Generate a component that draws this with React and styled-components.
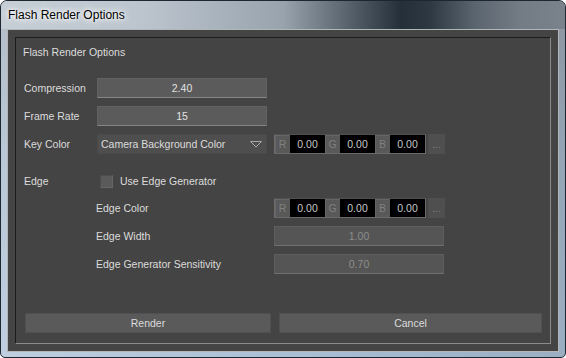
import React from "react"
import styled, { createGlobalStyle } from "styled-components"

const GlobalStyle = createGlobalStyle`
  html, body {
    margin: 0;
    padding: 0;
    background: #ffffff;
  }
  body {
    font-family: "Liberation Sans", Arial, sans-serif;
  }
`

const Window = styled.div`
  box-sizing: border-box;
  width: 566px;
  height: 358px;
  display: flex;
  flex-direction: column;
  border: 1px solid #1d2731;
  border-radius: 7px 7px 5px 5px;
  overflow: hidden;
  background:
    linear-gradient(to right, rgba(200, 210, 220, 0.55), rgba(120, 130, 140, 0.2) 60%, rgba(110, 120, 130, 0.35)),
    linear-gradient(to bottom, #9aa4ae 0px, #a9bdd2 160px, #b3cbe4 100%);
`

const TitleBar = styled.div`
  height: 28px;
  flex: none;
  display: flex;
  align-items: center;
  padding-left: 7px;
  background: linear-gradient(
    to right,
    #c6ced6 0%,
    #bcc5ce 25%,
    #98a3ae 50%,
    #55606b 62%,
    #252f39 71%,
    #2e3842 76%,
    #5b656f 84%,
    #737c85 92%,
    #7a838c 100%
  );
`

const TitleText = styled.span`
  font-size: 12px;
  color: #000;
  text-shadow: 0 0 6px #fff, 0 0 10px #fff, 0 0 3px rgba(255, 255, 255, 0.9);
`

const Frame = styled.div`
  flex: 1;
  display: flex;
  padding: 0 6px 5px 6px;
`

const Client = styled.div`
  flex: 1;
  display: flex;
  border: 1px solid #b3b6b9;
  background: #444444;
  padding: 7px;
`

const GroupBox = styled.div`
  flex: 1;
  display: flex;
  flex-direction: column;
  border-top: 1px solid #1c1c1c;
  border-left: 1px solid #1c1c1c;
  border-bottom: 1px solid #8b8b8b;
  border-right: 1px solid #8b8b8b;
  padding: 7px 8px 10px 8px;
  font-size: 10.5px;
  color: #dcdcdc;
`

const GroupTitle = styled.div`
  height: 14px;
  line-height: 14px;
  padding-left: 0;
  margin-left: -1px;
  margin-bottom: 19px;
`

const Row = styled.div`
  display: flex;
  align-items: center;
  height: 20px;
  margin-top: ${(p) => p.$gap || 0}px;
  padding-left: ${(p) => (p.$sub ? 72 : 0)}px;
`

const Label = styled.div`
  width: ${(p) => (p.$sub ? 178 : 73)}px;
  flex: none;
  white-space: nowrap;
`

const Field = styled.div`
  box-sizing: border-box;
  width: ${(p) => p.$w || 170}px;
  height: 20px;
  display: flex;
  align-items: center;
  justify-content: center;
  background: ${(p) => (p.$disabled ? "#555555" : "#5b5b5b")};
  border: 1px solid ${(p) => (p.$disabled ? "#5e5e5e" : "#626262")};
  border-bottom-color: ${(p) => (p.$disabled ? "#707070" : "#858585")};
  color: ${(p) => (p.$disabled ? "#8d8d8d" : "#e2e2e2")};
`

const Dropdown = styled.div`
  box-sizing: border-box;
  width: 170px;
  height: 20px;
  display: flex;
  align-items: center;
  justify-content: space-between;
  padding: 0 4px 0 3px;
  background: #4e4e4e;
  border: 1px solid #4a4a4a;
  color: #dcdcdc;
  margin-right: 7px;
`

const ColorGroup = styled.div`
  box-sizing: border-box;
  display: flex;
  height: 20px;
  border: 1px solid #6a6a6a;
  border-top-color: #505050;
`

const Channel = styled.div`
  width: 15px;
  display: flex;
  align-items: center;
  justify-content: center;
  background: #595959;
  color: #808080;
  box-shadow: inset 1px 1px 0 #666666;
`

const ChannelValue = styled.div`
  width: 35px;
  display: flex;
  align-items: center;
  justify-content: center;
  background: #000000;
  color: #c4c8cc;
`

const MoreButton = styled.div`
  width: 17px;
  height: 20px;
  margin-left: 2px;
  display: flex;
  align-items: flex-end;
  justify-content: center;
  padding-bottom: 4px;
  box-sizing: border-box;
  background: #4f4f4f;
  color: #7a7a7a;
  font-size: 10px;
  line-height: 10px;
`

const CheckBox = styled.div`
  box-sizing: border-box;
  width: 13px;
  height: 13px;
  margin-left: 3px;
  margin-right: 7px;
  background: #5a5a5a;
  border: 1px solid #4c4c4c;
  border-bottom-color: #666666;
  border-right-color: #666666;
`

const ButtonBar = styled.div`
  margin-top: auto;
  display: flex;
  gap: 8px;
  padding-left: 1px;
`

const Button = styled.div`
  box-sizing: border-box;
  width: ${(p) => p.$w}px;
  height: 20px;
  display: flex;
  align-items: center;
  justify-content: center;
  background: #5a5a5a;
  border: 1px solid #505050;
  color: #dcdcdc;
`

function RgbField() {
  return (
    <>
      <ColorGroup>
        <Channel>R</Channel>
        <ChannelValue>0.00</ChannelValue>
        <Channel>G</Channel>
        <ChannelValue>0.00</ChannelValue>
        <Channel>B</Channel>
        <ChannelValue>0.00</ChannelValue>
      </ColorGroup>
      <MoreButton>...</MoreButton>
    </>
  )
}

export default function App() {
  return (
    <>
      <GlobalStyle />
      <Window>
        <TitleBar>
          <TitleText>Flash Render Options</TitleText>
        </TitleBar>
        <Frame>
          <Client>
            <GroupBox>
              <GroupTitle>Flash Render Options</GroupTitle>

              <Row>
                <Label>Compression</Label>
                <Field>2.40</Field>
              </Row>
              <Row $gap={8}>
                <Label>Frame Rate</Label>
                <Field>15</Field>
              </Row>
              <Row $gap={8}>
                <Label>Key Color</Label>
                <Dropdown>
                  <span>Camera Background Color</span>
                  <svg width="12" height="7" viewBox="0 0 12 7">
                    <path d="M0.5 0.5 L11.5 0.5 L6 6 Z" fill="none" stroke="#a8a8a8" strokeWidth="1" />
                  </svg>
                </Dropdown>
                <RgbField />
              </Row>

              <Row $gap={17}>
                <Label>Edge</Label>
                <CheckBox />
                <span>Use Edge Generator</span>
              </Row>
              <Row $gap={7} $sub>
                <Label $sub>Edge Color</Label>
                <RgbField />
              </Row>
              <Row $gap={8} $sub>
                <Label $sub>Edge Width</Label>
                <Field $disabled>1.00</Field>
              </Row>
              <Row $gap={8} $sub>
                <Label $sub>Edge Generator Sensitivity</Label>
                <Field $disabled>0.70</Field>
              </Row>

              <ButtonBar>
                <Button $w={246}>Render</Button>
                <Button $w={263}>Cancel</Button>
              </ButtonBar>
            </GroupBox>
          </Client>
        </Frame>
      </Window>
    </>
  )
}
